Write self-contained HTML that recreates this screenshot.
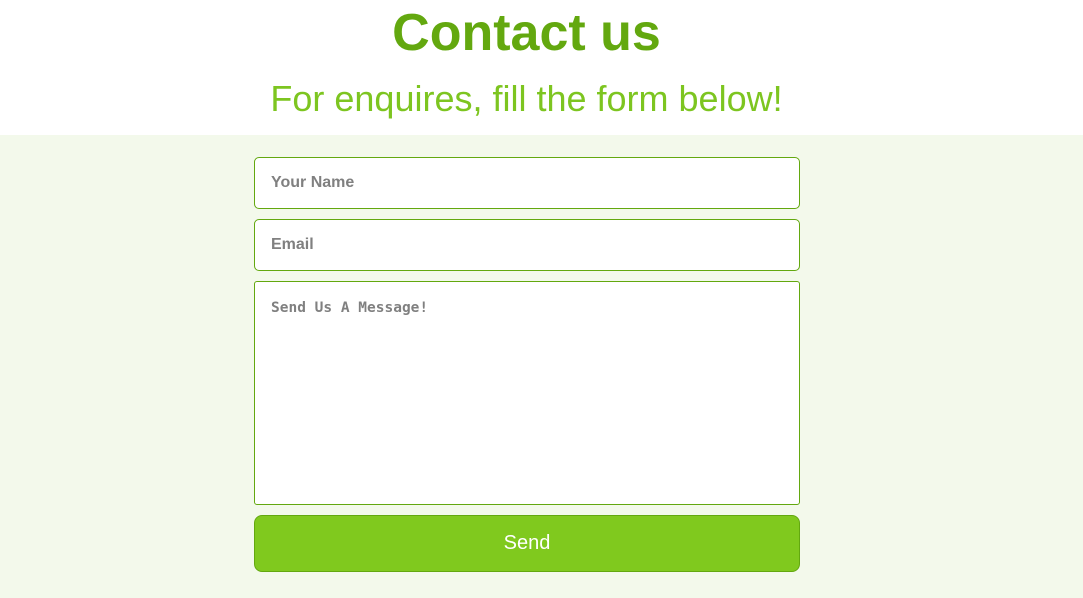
<!DOCTYPE html>
<html><head><style>
body{margin:0;width:1083px;height:598px;overflow:hidden;font-family:"Liberation Sans",sans-serif;background:#fff}
.top{height:135px;width:1053px;text-align:center;background:#fff}
h1{margin:0;padding-top:5px;font-size:52px;line-height:56px;color:#63a80f;font-weight:bold}
h2{margin:0;padding-top:17px;font-size:36px;line-height:42px;color:#7dc520;font-weight:normal}
.bg{background:#f3f9eb;height:463px;position:relative}
.f{position:absolute;left:254px;width:546px;border:1px solid #63a80f;border-radius:5px;background:#fff;box-sizing:border-box}
.ph{position:absolute;left:16px;color:#808080;font-weight:bold;font-size:16px}
</style></head><body>
<div class="top"><h1>Contact us</h1><h2>For enquires, fill the form below!</h2></div>
<div class="bg">
<div class="f" style="top:22px;height:52px"><span class="ph" style="top:16px">Your Name</span></div>
<div class="f" style="top:84px;height:52px"><span class="ph" style="top:16px">Email</span></div>
<div class="f" style="top:146px;height:224px;border-radius:3px"><span class="ph" style="top:18px;font-family:'DejaVu Sans Mono','Liberation Mono',monospace;font-size:14.5px">Send Us A Message!</span></div>
<div class="f" style="top:380px;height:57px;background:#80c91e;border-radius:8px;text-align:center;color:#fff;font-size:20px;line-height:55px">Send</div>
</div>
</body></html>
